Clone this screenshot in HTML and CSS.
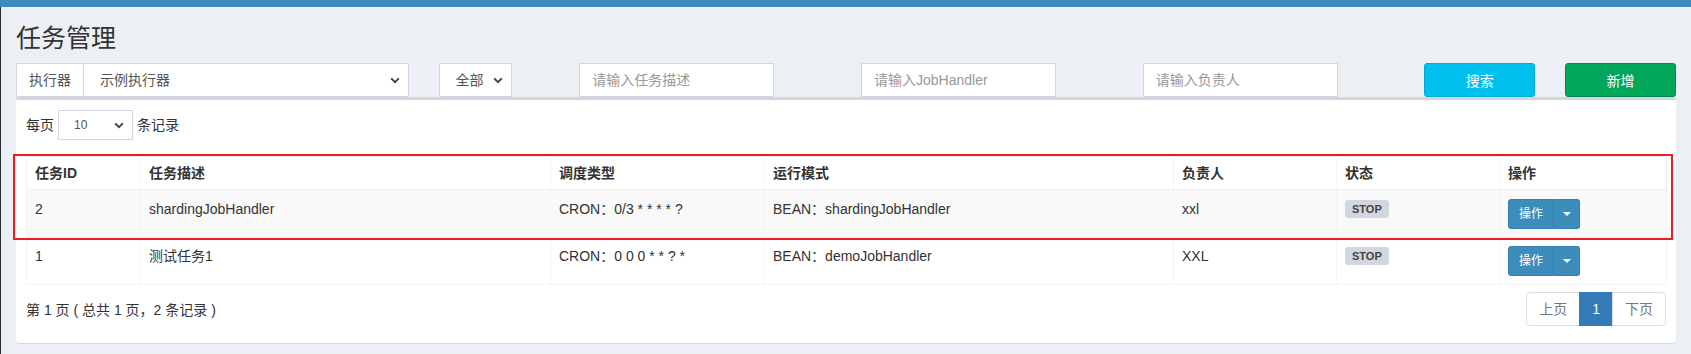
FILE: index.html
```html
<!DOCTYPE html>
<html lang="zh-CN">
<head>
    <meta charset="UTF-8">
    <meta name="viewport" content="width=device-width, initial-scale=1.0">
    <title>任务管理</title>
    <link rel="stylesheet" href="styles.css">
</head>
<body>
    <div class="topbar"></div>

    <div class="wrapper">
        <section class="content-header">
            <h1>任务管理</h1>
        </section>

        <section class="content">
            <!-- 查询条件 -->
            <div class="filter-row">
                <div class="col">
                    <div class="input-group">
                        <span class="addon">执行器</span>
                        <div class="sel sel-grow">
                            <span>示例执行器</span>
                            <svg class="chev" width="10" height="7" viewBox="0 0 10 7"><polyline points="1.2,1.4 5,5.2 8.8,1.4" fill="none" stroke="#444" stroke-width="2"/></svg>
                        </div>
                    </div>
                </div>
                <div class="col">
                    <div class="sel sel-status">
                        <span>全部</span>
                        <svg class="chev" width="10" height="7" viewBox="0 0 10 7"><polyline points="1.2,1.4 5,5.2 8.8,1.4" fill="none" stroke="#444" stroke-width="2"/></svg>
                    </div>
                </div>
                <div class="col"><input class="text-input" type="text" placeholder="请输入任务描述"></div>
                <div class="col"><input class="text-input" type="text" placeholder="请输入JobHandler"></div>
                <div class="col"><input class="text-input" type="text" placeholder="请输入负责人"></div>
                <div class="col"><button class="btn btn-search">搜索</button></div>
                <div class="col"><button class="btn btn-add">新增</button></div>
            </div>

            <div class="box">
                <div class="box-body">
                    <div class="length">
                        每页
                        <div class="sel sel-sm">
                            <span>10</span>
                            <svg class="chev" width="10" height="7" viewBox="0 0 10 7"><polyline points="1.2,1.4 5,5.2 8.8,1.4" fill="none" stroke="#444" stroke-width="2"/></svg>
                        </div>
                        条记录
                    </div>

                    <div class="table-wrap">
                        <table class="job-table">
                            <thead>
                                <tr>
                                    <th class="c-id">任务ID</th>
                                    <th class="c-desc">任务描述</th>
                                    <th class="c-type">调度类型</th>
                                    <th class="c-mode">运行模式</th>
                                    <th class="c-author">负责人</th>
                                    <th class="c-status">状态</th>
                                    <th class="c-ops">操作</th>
                                </tr>
                            </thead>
                            <tbody>
                                <tr>
                                    <td>2</td>
                                    <td>shardingJobHandler</td>
                                    <td>CRON：0/3 * * * * ?</td>
                                    <td>BEAN：shardingJobHandler</td>
                                    <td>xxl</td>
                                    <td><span class="label">STOP</span></td>
                                    <td>
                                        <div class="btn-group">
                                            <button class="op-main">操作</button>
                                            <button class="op-caret"><span class="caret"></span></button>
                                        </div>
                                    </td>
                                </tr>
                                <tr>
                                    <td>1</td>
                                    <td>测试任务1</td>
                                    <td>CRON：0 0 0 * * ? *</td>
                                    <td>BEAN：demoJobHandler</td>
                                    <td>XXL</td>
                                    <td><span class="label">STOP</span></td>
                                    <td>
                                        <div class="btn-group">
                                            <button class="op-main">操作</button>
                                            <button class="op-caret"><span class="caret"></span></button>
                                        </div>
                                    </td>
                                </tr>
                            </tbody>
                        </table>
                        <!-- 红框标注 -->
                        <div class="mark"></div>
                    </div>

                    <div class="table-foot">
                        <div class="info">第 1 页 ( 总共 1 页，2 条记录 )</div>
                        <ul class="pagination">
                            <li class="disabled">上页</li>
                            <li class="active">1</li>
                            <li class="disabled">下页</li>
                        </ul>
                    </div>
                </div>
            </div>
        </section>
    </div>
</body>
</html>
```

FILE: styles.css
```css
body {
    margin: 0;
    font-family: "Liberation Sans", "Noto Sans CJK SC", sans-serif;
    font-size: 14px;
    line-height: 20px;
    color: #333;
    background: #ecf0f5;
}

.topbar {
    height: 7px;
    background: #3c8dbc;
}

.wrapper {
    border-left: 1px solid #222d32;
    min-height: 347px;
}

.content-header {
    padding: 16px 15px 0;
}

.content-header h1 {
    margin: 0;
    font-size: 25px;
    font-weight: normal;
    line-height: 30px;
    color: #333;
}

.content {
    padding: 10px 15px 0;
}

/* 查询条件 */
.filter-row {
    display: grid;
    grid-template-columns: 3fr 1fr 2fr 2fr 2fr 1fr 1fr;
    margin: 0 -15px;
}

.col {
    padding: 0 15px;
}

.input-group {
    display: flex;
    height: 34px;
}

.addon {
    display: flex;
    align-items: center;
    padding: 0 12px;
    background: #fff;
    border: 1px solid #d2d6de;
    border-right: none;
    color: #555;
}

.sel {
    display: flex;
    align-items: center;
    justify-content: space-between;
    box-sizing: border-box;
    height: 34px;
    padding: 0 8px 0 13px;
    background: #fff;
    border: 1px solid #d2d6de;
    color: #555;
}

.sel-grow {
    flex: 1;
    padding-left: 16px;
}

.sel-status {
    width: 73px;
    padding-left: 16px;
}

.text-input {
    box-sizing: border-box;
    width: 195px;
    height: 34px;
    padding: 6px 12px;
    border: 1px solid #d2d6de;
    font-family: inherit;
    font-size: 14px;
    color: #555;
    outline: none;
}

.text-input::placeholder {
    color: #999;
}

.btn {
    width: 100%;
    height: 34px;
    border-radius: 3px;
    font-family: inherit;
    font-size: 14px;
    color: #fff;
    cursor: pointer;
}

.btn-search {
    background: #00c0ef;
    border: 1px solid #00acd6;
}

.btn-add {
    background: #00a65a;
    border: 1px solid #008d4c;
}

/* 列表 */
.box {
    background: #fff;
    border-top: 3px solid #d2d6de;
    border-radius: 3px;
    box-shadow: 0 1px 1px rgba(0,0,0,0.1);
}

.box-body {
    padding: 10px 10px 17px;
}

.length {
    display: flex;
    align-items: center;
    gap: 4px;
}

.sel-sm {
    width: 75px;
    height: 30px;
    padding-left: 15px;
    font-size: 12px;
    color: #555;
}

.table-wrap {
    position: relative;
    margin-top: 16px;
}

.job-table {
    width: 1640px;
    table-layout: fixed;
    border-collapse: collapse;
    border: 1px solid #f4f4f4;
}

.job-table th,
.job-table td {
    box-sizing: border-box;
    padding: 8px;
    border: 1px solid #f4f4f4;
    text-align: left;
    vertical-align: top;
    line-height: 20px;
    white-space: nowrap;
}

.job-table th {
    padding: 6px 8px;
    border-bottom-width: 2px;
}

.job-table tbody tr:nth-child(odd) {
    background: #f9f9f9;
}

.c-id { width: 114px; }
.c-desc { width: 410px; }
.c-type { width: 214px; }
.c-mode { width: 409px; }
.c-author { width: 163px; }
.c-status { width: 163px; }
.c-ops { width: 167px; }

.label {
    display: inline-block;
    padding: 3px 7px 3px;
    background: #d2d6de;
    color: #444;
    font-size: 11px;
    font-weight: bold;
    line-height: 12px;
    border-radius: 3px;
    vertical-align: 1px;
}

.btn-group {
    display: inline-flex;
    height: 30px;
}

.op-main,
.op-caret {
    background: #3c8dbc;
    border: 1px solid #367fa9;
    color: #fff;
    font-family: inherit;
    font-size: 12px;
    line-height: 18px;
    cursor: pointer;
}

.op-main {
    padding: 5px 10px;
    border-radius: 3px 0 0 3px;
    white-space: nowrap;
}

.op-caret {
    width: 26px;
    padding: 0;
    border-left: none;
    border-radius: 0 3px 3px 0;
    display: flex;
    align-items: center;
    justify-content: center;
}

.caret {
    width: 0;
    height: 0;
    border-top: 4px solid #fff;
    border-left: 4px solid transparent;
    border-right: 4px solid transparent;
}

.mark {
    position: absolute;
    left: -13px;
    top: -2px;
    width: 1656px;
    height: 82px;
    border: 2px solid #ed1c24;
}

.table-foot {
    display: flex;
    justify-content: space-between;
    align-items: flex-start;
    margin-top: 7px;
}

.info {
    padding-top: 8px;
}

.pagination {
    display: flex;
    list-style: none;
    margin: 0;
    padding: 0;
}

.pagination li {
    padding: 6px 12px;
    line-height: 20px;
    border: 1px solid #ddd;
    margin-left: -1px;
    background: #fff;
}

.pagination li:first-child {
    border-radius: 4px 0 0 4px;
}

.pagination li:last-child {
    border-radius: 0 4px 4px 0;
}

.pagination .disabled {
    color: #777;
}

.pagination .active {
    background: #337ab7;
    border-color: #337ab7;
    color: #fff;
}
```
